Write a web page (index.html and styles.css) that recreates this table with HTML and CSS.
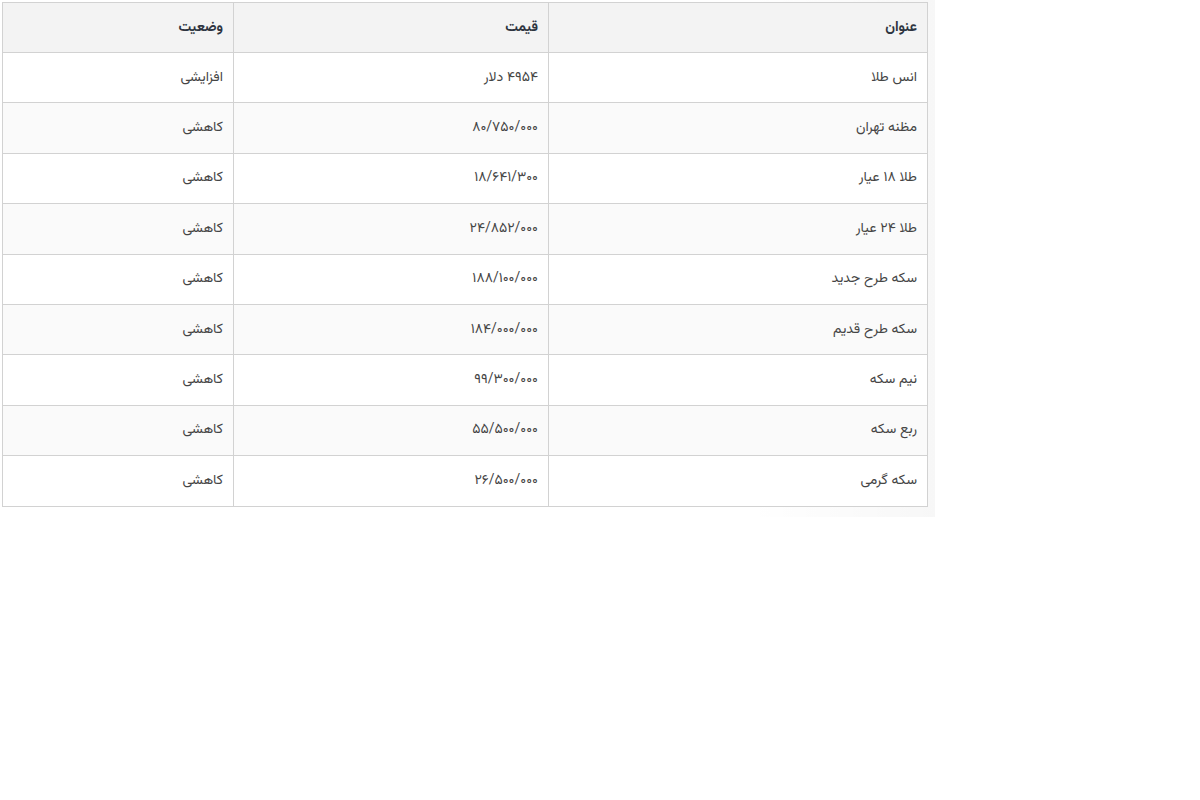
FILE: index.html
```html
<!DOCTYPE html>
<html lang="fa" dir="rtl">
<head>
<meta charset="utf-8">
<title>قیمت طلا و سکه</title>
<link rel="stylesheet" href="styles.css">
</head>
<body>
<div class="wrap">
  <table class="prices">
    <thead>
      <tr><th class="c-title">عنوان</th><th class="c-price">قیمت</th><th class="c-state">وضعیت</th></tr>
    </thead>
    <tbody>
      <tr><td>انس طلا</td><td>۴۹۵۴ دلار</td><td>افزایشی</td></tr>
      <tr><td>مظنه تهران</td><td>۸۰/۷۵۰/۰۰۰</td><td>کاهشی</td></tr>
      <tr><td>طلا ۱۸ عیار</td><td>۱۸/۶۴۱/۳۰۰</td><td>کاهشی</td></tr>
      <tr><td>طلا ۲۴ عیار</td><td>۲۴/۸۵۲/۰۰۰</td><td>کاهشی</td></tr>
      <tr><td>سکه طرح جدید</td><td>۱۸۸/۱۰۰/۰۰۰</td><td>کاهشی</td></tr>
      <tr><td>سکه طرح قدیم</td><td>۱۸۴/۰۰۰/۰۰۰</td><td>کاهشی</td></tr>
      <tr><td>نیم سکه</td><td>۹۹/۳۰۰/۰۰۰</td><td>کاهشی</td></tr>
      <tr><td>ربع سکه</td><td>۵۵/۵۰۰/۰۰۰</td><td>کاهشی</td></tr>
      <tr><td>سکه گرمی</td><td>۲۶/۵۰۰/۰۰۰</td><td>کاهشی</td></tr>
    </tbody>
  </table>
</div>
</body>
</html>
```
FILE: styles.css
```css
html, body {
  margin: 0;
  padding: 0;
  background: #ffffff;
}
body {
  font-family: "Vazirmatn", "Noto Sans Arabic", "DejaVu Sans", sans-serif;
  font-size: 14px;
  color: #454545;
}
.wrap {
  width: 925px;
  margin-left: 0;
  margin-right: auto;
  padding: 2px 7px 10px 3px;
  background: linear-gradient(to left, rgba(0,0,0,0.03), rgba(0,0,0,0) 20%);
}
.prices {
  width: 925px;
  border-collapse: collapse;
  background: #ffffff;
  table-layout: fixed;
}
.prices th,
.prices td {
  box-sizing: border-box;
  border: 1px solid #d2d2d2;
  padding: 0 10px;
  text-align: right;
  vertical-align: middle;
  line-height: 20px;
}
.prices th {
  height: 50px;
  background: #f3f3f3;
  color: #2d3440;
  font-weight: bold;
}
.prices td {
  height: 50.4px;
}
.prices tbody tr:nth-child(even) td {
  background: #fafafa;
}
.c-title { width: 379px; }
.c-price { width: 315px; }
.c-state { width: 231px; }
```
